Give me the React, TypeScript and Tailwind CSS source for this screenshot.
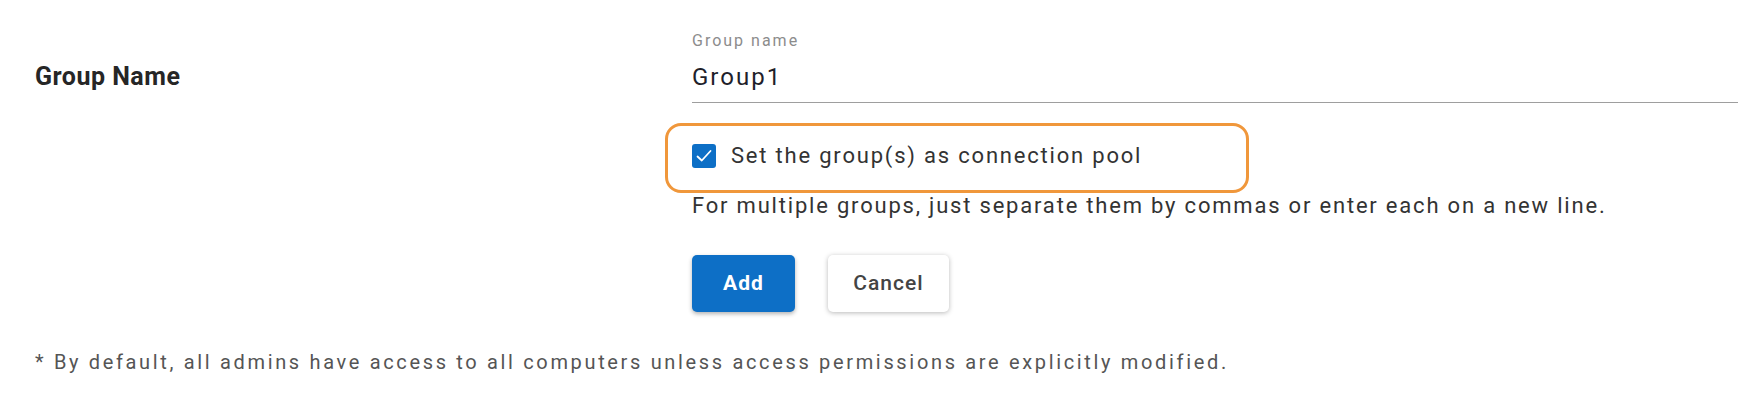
import React from "react";

export default function App() {
  return (
    <div className="w-[1738px] h-[418px] overflow-hidden bg-white pl-[35px] font-['Roboto',_'Liberation_Sans',_sans-serif]">
      <div className="flex">
        {/* Left label */}
        <div className="w-[657px] shrink-0 pt-[61px]">
          <h2 className="text-[25px] leading-[32px] font-bold tracking-[0.5px] text-[#262626]">Group Name</h2>
        </div>

        {/* Form column */}
        <div className="flex-1 pt-[32px]">
          <div className="border-b border-[#9e9e9e] pb-[9px]">
            <p className="text-[16px] leading-[18px] tracking-[2px] text-[#8c8c8c]">Group name</p>
            <p className="mt-[11px] text-[24px] leading-[32px] tracking-[2px] text-[#1f1f2b]">Group1</p>
          </div>

          <div className="mt-[20px] ml-[-27px] flex h-[70px] w-[584px] items-center rounded-[16px] border-[3px] border-[#f0973b] pl-[24px] pb-[4px]">
            <label className="flex items-center gap-[15px]">
              <span className="flex h-[24px] w-[24px] items-center justify-center rounded-[3px] bg-[#0d6fc6]">
                <svg width="18" height="18" viewBox="0 0 18 18" fill="none">
                  <path d="M2.5 9.5 L6.8 13.5 L15.5 4" stroke="white" strokeWidth="1.8" strokeLinecap="round" strokeLinejoin="round" />
                </svg>
              </span>
              <span className="text-[22px] leading-[24px] tracking-[1.8px] text-[#333333]">Set the group(s) as connection pool</span>
            </label>
          </div>

          <p className="mt-[1px] text-[22px] leading-[24px] tracking-[1.8px] text-[#333333]">
            For multiple groups, just separate them by commas or enter each on a new line.
          </p>

          <div className="mt-[37px] flex gap-[33px]">
            <button className="h-[57px] w-[103px] rounded-[5px] bg-[#0d6fc6] text-[21px] font-bold tracking-[1px] text-white shadow-[0_2px_4px_rgba(0,0,0,0.3)]">
              Add
            </button>
            <button className="h-[57px] w-[121px] rounded-[5px] bg-white text-[21px] font-medium tracking-[1px] text-[#444444] shadow-[0_1px_5px_rgba(0,0,0,0.28)]">
              Cancel
            </button>
          </div>
        </div>
      </div>

      <p className="mt-[38px] text-[20px] leading-[24px] tracking-[2.66px] text-[#555555]">
        * By default, all admins have access to all computers unless access permissions are explicitly modified.
      </p>
    </div>
  );
}
